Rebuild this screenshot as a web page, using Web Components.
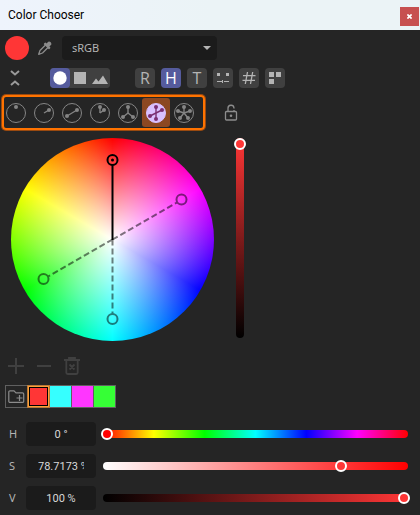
<!DOCTYPE html>
<html lang="en">
<head>
<meta charset="utf-8">
<meta name="viewport" content="width=device-width, initial-scale=1">
<title>Color Chooser</title>
<style>
  body {
    margin: 0;
    background: #252525;
    color: #b4b4b4;
    font: 11px/16px "Noto Sans", "Open Sans", sans-serif;
  }
</style>
</head>
<body>
<color-chooser></color-chooser>

<script>
class TitleBar extends HTMLElement {
  constructor() {
    super();
    this.attachShadow({ mode: 'open' });
  }

  connectedCallback() {
    this.shadowRoot.innerHTML = `
      <style>
        :host {
          display: flex;
          align-items: center;
          justify-content: space-between;
          height: 30px;
          padding: 0 1px 0 8px;
          background: linear-gradient(90deg, #eef3fc, #ebf3f6 50%);
          color: #000;
        }

        h1 {
          margin: 0;
          font: 12px/16px Roboto, sans-serif;
        }

        button {
          display: flex;
          align-items: center;
          justify-content: center;
          width: 19px;
          height: 19px;
          margin-top: 3px;
          padding: 0;
          border: 0;
          background: #c75050;
        }
      </style>
      <h1><slot></slot></h1>
      <button aria-label="Close">
        <svg width="5" height="5" viewBox="0 0 6 6" stroke="#fff" stroke-width="2"><path d="M.5 .5l5 5M5.5 .5l-5 5"/></svg>
      </button>
    `;
  }
}

class ToolButton extends HTMLElement {
  constructor() {
    super();
    this.attachShadow({ mode: 'open' });
  }

  connectedCallback() {
    const active = this.hasAttribute('active');
    this.shadowRoot.innerHTML = `
      <style>
        :host {
          display: block;
        }

        button {
          display: flex;
          align-items: center;
          justify-content: center;
          width: 20px;
          height: 20px;
          padding: 0;
          border: 0;
          border-radius: 4px;
          background: #404040;
          color: #b4b4b4;
          font: 16px/20px "Open Sans", sans-serif;
        }

        button[aria-pressed="true"] {
          background: #555b9d;
          color: #fff;
        }

        :host([plain]) button {
          background: none;
          color: inherit;
        }
      </style>
      <button aria-pressed="${active}" aria-label="${this.getAttribute('label')}"><slot></slot></button>
    `;

    const button = this.shadowRoot.querySelector('button');
    if (this.hasAttribute('plain')) button.removeAttribute('aria-pressed');
  }
}

class HarmonyPicker extends HTMLElement {
  constructor() {
    super();
    this.attachShadow({ mode: 'open' });
  }

  connectedCallback() {
    // dots on the ring of each scheme, drawn in a 22px box
    const schemes = [
      { name: 'Single', dots: [[11, 5]], lines: false },
      { name: 'Analogous', dots: [[16, 8]], lines: true },
      { name: 'Complementary', dots: [[16, 8], [6, 14]], lines: true },
      { name: 'Split', dots: [[11, 5], [15, 8]], lines: true },
      { name: 'Triad', dots: [[11, 5], [6, 15], [16, 15]], lines: true },
      { name: 'Tetrad', dots: [[11, 5], [17, 8], [5, 14], [11, 17]], lines: true },
      { name: 'Pentad', dots: [[11, 5], [17, 9], [15, 16], [7, 16], [5, 9]], lines: true },
    ];

    this.shadowRoot.innerHTML = `
      <style>
        :host {
          display: flex;
          padding-right: 5px;
          border: 2px solid #ff7300;
          border-radius: 4px;
          box-shadow: 0 0 0 1px #9a4a10;
        }

        button {
          display: flex;
          align-items: center;
          justify-content: center;
          width: 28px;
          height: 29px;
          margin: 1px 0;
          padding: 0;
          border: 0;
          border-radius: 3px;
          background: none;
          color: #858585;
        }

        button:first-of-type {
          margin-left: -2px;
        }

        button.active {
          background: #8c4822;
          color: #7a2f72;
        }

        button.active .ring {
          fill: #d9c0ff;
          stroke: #d9c0ff;
        }
      </style>
      ${schemes.map((s) => this.renderScheme(s)).join('')}
    `;

    const buttons = this.shadowRoot.querySelectorAll('button');
    buttons.forEach((button) => {
      button.addEventListener('click', () => {
        buttons.forEach((b) => b.classList.remove('active'));
        button.classList.add('active');
      });
    });
  }

  renderScheme(s) {
    const lines = s.dots.map(([x, y]) => `<path d="M11 11L${x} ${y}"/>`).join('');
    const dots = s.dots.map(([x, y]) => `<circle cx="${x}" cy="${y}" r="2"/>`).join('');
    return `
      <button class="${s.name === 'Tetrad' ? 'active' : ''}" aria-label="${s.name}">
        <svg width="22" height="22" viewBox="0 0 22 22">
          <circle class="ring" cx="11" cy="11" r="9.5" fill="none" stroke="currentColor"/>
          <g stroke="currentColor" stroke-width="1.4">${s.lines ? lines : ''}</g>
          <g fill="currentColor">${dots}</g>
        </svg>
      </button>
    `;
  }
}

class ColorWheel extends HTMLElement {
  constructor() {
    super();
    this.attachShadow({ mode: 'open' });
  }

  connectedCallback() {
    this.shadowRoot.innerHTML = `
      <style>
        :host {
          display: block;
          width: 203px;
          height: 203px;
          border-radius: 50%;
          background:
            radial-gradient(closest-side, #fff, rgba(255, 255, 255, 0)),
            conic-gradient(#f00, #f0f, #00f, #0ff, #0f0, #ff0, #f00);
        }

        svg {
          display: block;
          width: 100%;
          height: 100%;
        }
      </style>
      <svg viewBox="0 0 203 203" fill="none" stroke="#000" stroke-width="2" role="img" aria-label="Hue and saturation">
        <g opacity=".5">
          <path stroke-dasharray="6 3" d="M101.5 101.5L166 64.5M101.5 101.5L37 138.5M101.5 101.5V176"/>
          <circle cx="170.5" cy="61.5" r="5"/>
          <circle cx="32.5" cy="141" r="5"/>
          <circle cx="101.5" cy="181" r="5"/>
        </g>
        <path d="M101.5 27V102"/>
        <circle cx="101.5" cy="22" r="5"/>
        <circle cx="101.5" cy="22" r="1.5" fill="#000" stroke="none"/>
      </svg>
    `;
  }
}

class RangeSlider extends HTMLElement {
  constructor() {
    super();
    this.attachShadow({ mode: 'open' });
  }

  connectedCallback() {
    this.shadowRoot.innerHTML = `
      <style>
        :host {
          display: flex;
          border-radius: 4px;
          background: var(--track);
        }

        /* the thumb reaches a little past both ends of the track */
        input {
          appearance: none;
          flex: 1;
          min-width: 0;
          height: 8px;
          margin: 0 -2px;
          background: none;
        }

        input::-webkit-slider-thumb {
          appearance: none;
          box-sizing: border-box;
          width: 12px;
          height: 12px;
          border: 2px solid #fff;
          border-radius: 50%;
          background: var(--thumb, #ff3636);
        }

        :host([vertical]) input {
          writing-mode: vertical-lr;
          direction: rtl;
          flex: none;
          width: 8px;
          height: 100%;
          margin: 0;
        }

        :host([vertical]) input::-webkit-slider-thumb {
          margin: 0 -2px;
        }
      </style>
      <input type="range" min="0" max="${this.getAttribute('max')}" step="any"
        value="${this.getAttribute('value')}" aria-label="${this.getAttribute('label')}">
    `;
  }
}

class ChannelRow extends HTMLElement {
  constructor() {
    super();
    this.attachShadow({ mode: 'open' });
  }

  connectedCallback() {
    const name = this.getAttribute('name');
    const value = this.getAttribute('value');
    const unit = this.getAttribute('unit');
    this.shadowRoot.innerHTML = `
      <style>
        :host {
          display: flex;
          align-items: center;
        }

        label {
          width: 17px;
          padding-left: 4px;
        }

        input {
          box-sizing: border-box;
          width: 70px;
          height: 24px;
          margin-right: 7px;
          padding: 0 12px;
          border: 0;
          border-radius: 4px;
          background: #1b1b1b;
          color: #d8d8d8;
          font: 11px/16px Roboto, sans-serif;
          text-align: center;
        }

        range-slider {
          flex: 1;
        }
      </style>
      <label for="value">${name}</label>
      <input id="value" type="text" value="${value} ${unit}">
      <range-slider label="${name}" max="${unit === '°' ? 360 : 100}" value="${value}"></range-slider>
    `;
  }
}

class ColorChooser extends HTMLElement {
  constructor() {
    super();
    this.attachShadow({ mode: 'open' });
  }

  connectedCallback() {
    this.shadowRoot.innerHTML = `
      <style>
        :host {
          display: block;
        }

        main {
          padding: 6px 12px 5px 5px;
        }

        .row {
          display: flex;
          align-items: center;
        }

        .current {
          width: 24px;
          height: 24px;
          padding: 0;
          border: 0;
          border-radius: 50%;
          background: #ff3636;
        }

        .current + tool-button {
          margin-left: 6px;
        }

        .space {
          display: grid;
          align-items: center;
          width: 155px;
          margin-left: 7px;
        }

        .space select,
        .space svg {
          grid-area: 1 / 1;
        }

        .space svg {
          justify-self: end;
          margin-right: 6px;
          pointer-events: none;
        }

        select {
          appearance: none;
          width: 100%;
          height: 24px;
          padding: 0 10px;
          border: 0;
          border-radius: 4px;
          background: #1b1b1b;
          color: #b4b4b4;
          font: inherit;
        }

        .tools {
          margin-top: 8px;
        }

        .shapes {
          display: flex;
          margin: 0 25px;
          border-radius: 4px;
          background: #404040;
        }

        .models {
          display: flex;
          gap: 6px;
        }

        .harmony {
          gap: 16px;
          margin: 7px 0 0 -3px;
        }

        .picker {
          display: flex;
          gap: 22px;
          margin: 8px 0 0 6px;
        }

        .picker range-slider {
          height: 200px;
          --track: linear-gradient(#ff3636, #000);
        }

        .actions {
          gap: 8px;
          margin: 15px 0 0 1px;
          color: #404040;
        }

        .palette {
          display: flex;
          width: max-content;
          margin-top: 9px;
          border: 1px solid #606060;
          gap: 1px;
          background: #606060;
        }

        .palette button {
          display: flex;
          align-items: center;
          justify-content: center;
          width: 21px;
          height: 21px;
          padding: 0;
          border: 0;
          background: var(--swatch, #252525);
        }

        .palette .selected {
          border: 1px solid #ffa038;
          box-shadow: inset 0 0 0 1px #000, 0 0 0 1px #b87a3a;
          z-index: 1;
        }

        .channels {
          display: grid;
          gap: 8px;
          margin-top: 14px;
        }
      </style>

      <title-bar>Color Chooser</title-bar>
      <main>
        <div class="row">
          <button class="current" aria-label="Current color"></button>
          <tool-button plain label="Pick from screen">
            <svg width="16" height="16" viewBox="0 0 16 16" fill="none" stroke="#8c8c8c" stroke-width="1.3" stroke-linejoin="round">
              <path d="M8.5 5L3 10.5L1.7 14.3L5.5 13L11 7.5"/>
              <path fill="#8c8c8c" d="M7.5 4L12 8.5L12.7 7.8L11.5 6.5L13.7 4.3A1.7 1.7 0 0 0 11.7 2.3L9.5 4.5L8.3 3.3Z"/>
            </svg>
          </tool-button>
          <div class="space">
            <select aria-label="Color space"><option>sRGB</option></select>
            <svg width="8" height="4" viewBox="0 0 8 4" fill="#b4b4b4"><path d="M0 0h8L4 4z"/></svg>
          </div>
        </div>

        <div class="row tools">
          <tool-button plain label="Collapse">
            <svg width="10" height="18" viewBox="0 0 10 18" fill="none" stroke="#9a9a9a" stroke-width="2"><path d="M1 2L5 5.5L9 2M1 16L5 12.5L9 16"/></svg>
          </tool-button>
          <div class="shapes">
            <tool-button active label="Wheel">
              <svg width="14" height="14" viewBox="0 0 14 14" fill="#fff"><circle cx="7" cy="7" r="6.7"/></svg>
            </tool-button>
            <tool-button label="Square">
              <svg width="12" height="12" viewBox="0 0 12 12" fill="#b4b4b4"><path d="M0 0h12v12H0z"/></svg>
            </tool-button>
            <tool-button label="Image">
              <svg width="16" height="14" viewBox="0 0 16 14" fill="#b4b4b4"><path d="M0 13L4 7.5L6.5 10.5L11 4.5L16 13z"/></svg>
            </tool-button>
          </div>
          <div class="models">
            <tool-button label="RGB">R</tool-button>
            <tool-button label="HSV" active>H</tool-button>
            <tool-button label="Temperature">T</tool-button>
            <tool-button label="Sliders">
              <svg width="14" height="14" viewBox="0 0 14 14" fill="#b4b4b4"><path d="M1 2h3v3H1zM10 2h3v3h-3zM1 10h5v1H1zM6 9h1v3H6zM8 10h5v1H8z"/></svg>
            </tool-button>
            <tool-button label="Hex">
              <svg width="14" height="14" viewBox="0 0 14 14" fill="none" stroke="#b4b4b4" stroke-width="1.3"><path d="M5.5 1L3.3 13M10.7 1L8.5 13M1 4.7h12.5M.5 9.3H13"/></svg>
            </tool-button>
            <tool-button label="Swatches">
              <svg width="12" height="12" viewBox="0 0 12 12" fill="#b4b4b4"><path d="M0 0h5v5H0zM7 0h5v5H7zM0 7h5v5H0z"/></svg>
            </tool-button>
          </div>
        </div>

        <div class="row harmony">
          <harmony-picker></harmony-picker>
          <tool-button plain label="Lock">
            <svg width="14" height="18" viewBox="0 0 14 18" fill="none" stroke="#8c8c8c" stroke-width="1.3">
              <rect x="1.5" y="7.5" width="11" height="8.5" rx="1"/>
              <path d="M4 7.5V4.5A3 3 0 0 1 10 4V4.5M10 6v1.5"/>
              <circle cx="7" cy="11.7" r="1.3" fill="#8c8c8c" stroke="none"/>
            </svg>
          </tool-button>
        </div>

        <div class="picker">
          <color-wheel></color-wheel>
          <range-slider vertical label="Brightness" max="100" value="100"></range-slider>
        </div>

        <div class="row actions">
          <tool-button plain label="Add color">
            <svg width="16" height="16" viewBox="0 0 16 16" fill="none" stroke="currentColor" stroke-width="2"><path d="M8 0v16M0 8h16"/></svg>
          </tool-button>
          <tool-button plain label="Remove color">
            <svg width="16" height="16" viewBox="0 0 16 16" fill="none" stroke="currentColor" stroke-width="2"><path d="M1 8h14"/></svg>
          </tool-button>
          <tool-button plain label="Delete palette">
            <svg width="16" height="18" viewBox="0 0 16 18" fill="none" stroke="currentColor" stroke-width="1.8"><path d="M0 3h16M5 2.5V1h6v1.5M2.3 3v12.5a1.5 1.5 0 0 0 1.5 1.5h8.4a1.5 1.5 0 0 0 1.5-1.5V3M5.5 7.5l5 5M10.5 7.5l-5 5"/></svg>
          </tool-button>
        </div>

        <div class="palette">
          <button aria-label="New folder">
            <svg width="17" height="14" viewBox="0 0 17 14" fill="none" stroke="#8c8c8c" stroke-width="1.2"><path d="M9 12.4H2A1.2 1.2 0 0 1 .8 11.2V2A1.2 1.2 0 0 1 2 .8h4l2 2h6.5a1.2 1.2 0 0 1 1.2 1.2v7.2a1.2 1.2 0 0 1-1.2 1.2H9M11.5 5v6M8.5 8h6"/></svg>
          </button>
          <button class="selected" aria-label="Red" style="--swatch:#ff3636"></button>
          <button aria-label="Cyan" style="--swatch:#36ffff"></button>
          <button aria-label="Magenta" style="--swatch:#ff36ff"></button>
          <button aria-label="Green" style="--swatch:#36ff36"></button>
        </div>

        <div class="channels">
          <channel-row name="H" value="0" unit="°" style="--thumb:#f00;--track:linear-gradient(90deg,#f00,#ff0,#0f0,#0ff,#00f,#f0f,#f00)"></channel-row>
          <channel-row name="S" value="78.7173" unit="%" style="--track:linear-gradient(90deg,#fff,#f00)"></channel-row>
          <channel-row name="V" value="100" unit="%" style="--track:linear-gradient(90deg,#000,#ff3636)"></channel-row>
        </div>
      </main>
    `;
  }
}

customElements.define('title-bar', TitleBar);
customElements.define('tool-button', ToolButton);
customElements.define('harmony-picker', HarmonyPicker);
customElements.define('color-wheel', ColorWheel);
customElements.define('range-slider', RangeSlider);
customElements.define('channel-row', ChannelRow);
customElements.define('color-chooser', ColorChooser);
</script>
</body>
</html>
